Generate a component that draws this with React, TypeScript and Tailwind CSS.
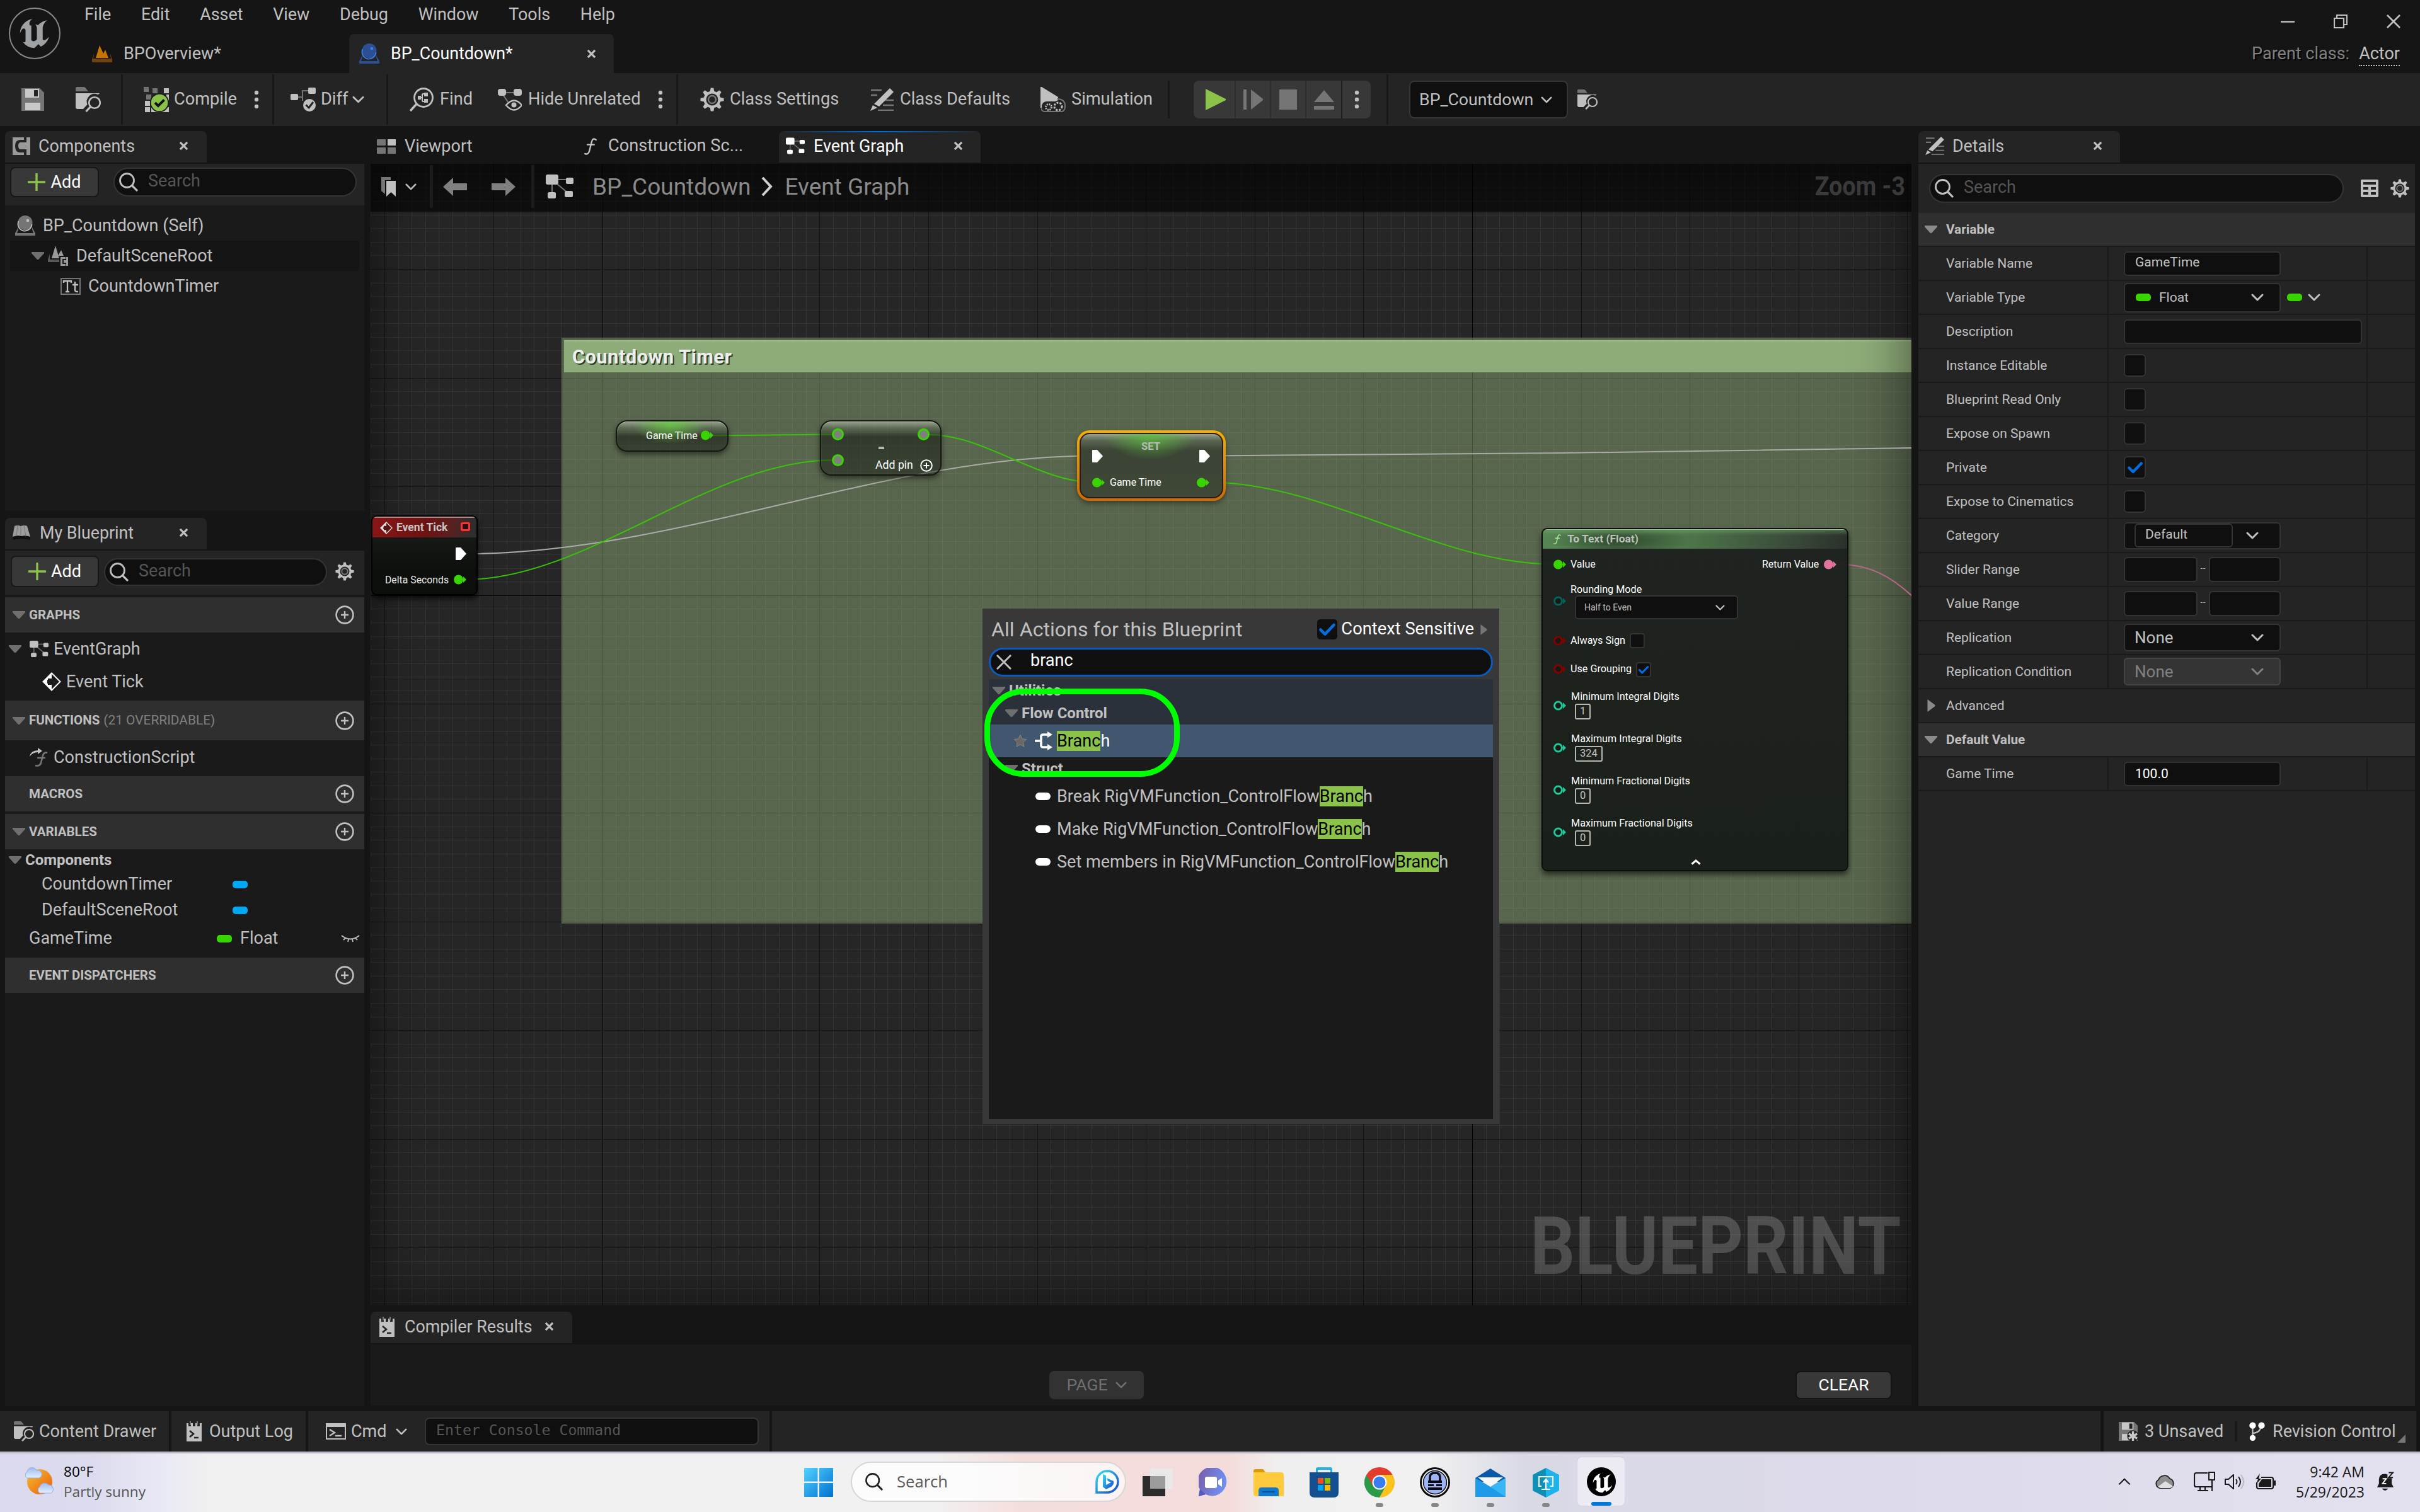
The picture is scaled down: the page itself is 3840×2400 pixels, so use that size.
import React from "react";
import { SiUnrealengine } from "react-icons/si";

type P = { className?: string };

/* ---------- small shared drawings ---------- */

const Down = ({ className = "w-5 h-3 text-[#6f6f6f]" }: P) => (
  <svg viewBox="0 0 20 12" className={`shrink-0 ${className}`}><path d="M0 0h20v2L11 12H9L0 2z" fill="currentColor" /></svg>
);
const Right = ({ className = "w-3 h-5 text-[#8a8a8a]" }: P) => (
  <svg viewBox="0 0 12 20" className={`shrink-0 ${className}`}><path d="M0 0l12 9v2L0 20z" fill="currentColor" /></svg>
);
const Chevron = ({ className = "w-5 h-3" }: P) => (
  <svg viewBox="0 0 20 12" className={`shrink-0 ${className}`}><path d="M2 2l8 8 8-8" fill="none" stroke="currentColor" strokeWidth="3" strokeLinecap="round" strokeLinejoin="round" /></svg>
);
const Close = ({ className = "w-4 h-4" }: P) => (
  <svg viewBox="0 0 16 16" className={`shrink-0 ${className}`}><path d="M2 2l12 12M14 2L2 14" stroke="currentColor" strokeWidth="3.4" /></svg>
);
const Lens = ({ className = "w-[30px] h-[30px]" }: P) => (
  <svg viewBox="0 0 30 30" className={`shrink-0 ${className}`}><circle cx="12.5" cy="12.5" r="11" fill="none" stroke="currentColor" strokeWidth="2.8" /><path d="M20 20l9 9" stroke="currentColor" strokeWidth="3.2" /></svg>
);
const Dots = () => (
  <svg viewBox="0 0 8 30" className="w-2 h-[30px] shrink-0 text-[#c0c0c0]"><circle cx="4" cy="4" r="3.2" fill="currentColor" /><circle cx="4" cy="15" r="3.2" fill="currentColor" /><circle cx="4" cy="26" r="3.2" fill="currentColor" /></svg>
);
const Gear = ({ className = "w-[38px] h-[38px]" }: P) => (
  <svg viewBox="-19 -19 38 38" className={`shrink-0 text-[#c0c0c0] ${className}`}>
    <circle r="11.5" fill="none" stroke="currentColor" strokeWidth="4" />
    <circle r="6" fill="none" stroke="#7a7a7a" strokeWidth="2.4" />
    {[0, 45, 90, 135, 180, 225, 270, 315].map((a) => (
      <path key={a} transform={`rotate(${a})`} d="M-3.6 -12l1.4-6.5h4.4l1.4 6.5z" fill="currentColor" />
    ))}
  </svg>
);
const Tick = ({ className = "w-6 h-6" }: P) => (
  <svg viewBox="0 0 24 24" className={`shrink-0 ${className}`}><path d="M3 12.5l6 6L21 6" fill="none" stroke="#0070e0" strokeWidth="4" strokeLinecap="round" strokeLinejoin="round" /></svg>
);
const PlusRing = () => (
  <svg viewBox="0 0 30 30" className="w-[30px] h-[30px] shrink-0 text-[#c0c0c0]"><circle cx="15" cy="15" r="13.4" fill="none" stroke="currentColor" strokeWidth="2.6" /><path d="M15 9v12M9 15h12" stroke="currentColor" strokeWidth="2.4" /></svg>
);
const GraphIcon = ({ className = "w-[30px] h-[27px]" }: P) => (
  <svg viewBox="0 0 44 38" className={`shrink-0 ${className}`} fill="currentColor">
    <path d="M10 8h26M10 10v22M12 10l24 20" stroke="#777" strokeWidth="2" />
    <rect width="20" height="16" rx="3" /><rect x="32" y="5" width="12" height="10" rx="2.5" />
    <rect x="3" y="28" width="13" height="10" rx="2.5" /><rect x="30" y="26" width="13" height="10" rx="2.5" />
  </svg>
);
const FolderFind = ({ className = "w-10 h-10" }: P) => (
  <svg viewBox="0 0 40 40" className={`shrink-0 ${className}`}>
    <path d="M0 7V2q0-2 2-2h11q2 0 3 2l4 5z" fill="#757575" />
    <path d="M0 10h38q-1 2-3 2a12.500 12.500 0 0 0-16.500 16L12 35H3q-3 0-3-3z" fill="#c0c0c0" />
    <circle cx="30" cy="25" r="8.800" fill="none" stroke="#c0c0c0" strokeWidth="2.600" /><path d="M24 31l-7.500 8" stroke="#c0c0c0" strokeWidth="3.200" />
  </svg>
);
const Floppy = ({ star, className = "w-9 h-9" }: P & { star?: boolean }) => (
  <svg viewBox="0 0 36 36" className={`shrink-0 ${className}`}>
    <path d="M0 0h29l7 7v29H0z" fill="#757575" /><path d="M6 1h22v14H6z" fill="#c8c8c8" /><path d="M20 3h6v10h-6z" fill="#242424" /><path d="M6 23h24v12H6z" fill="#c8c8c8" />
    {star && <><circle cx="27" cy="27" r="11" fill="#242424" /><path d="M27 18v18M19 22.500l16 9M35 22.500l-16 9" stroke="#c8c8c8" strokeWidth="4" /></>}
  </svg>
);
const Pencil = ({ className = "w-[37px] h-9" }: P) => (
  <svg viewBox="0 0 37 36" className={`shrink-0 ${className}`}>
    <path d="M1 3h17M1 11h10M24 19h13M20 27h17M12 35h25" stroke="#757575" strokeWidth="2.6" />
    <path d="M31 0l6 6L14 29l-8-4z" fill="#c0c0c0" /><path d="M4 27l7 4-11 5z" fill="#c0c0c0" />
  </svg>
);
const FnIcon = ({ className = "w-5 h-7" }: P) => (
  <svg viewBox="0 0 20 28" className={`shrink-0 ${className}`}><path d="M19 3q-5-4-7 3L8 22q-2 6-7 4M5 11h11" fill="none" stroke="currentColor" strokeWidth="2.5" strokeLinecap="round" /></svg>
);
const Actor = ({ main, glass, className = "w-8 h-8" }: P & { main: string; glass: string }) => (
  <svg viewBox="0 0 32 32" className={`shrink-0 ${className}`}>
    <path d="M5 19L0 28v4h32v-4l-5-9v3l2 6H3l2-6z" fill={main} /><circle cx="16" cy="11.500" r="11.500" fill={main} />
    <path d="M5.500 9a11 11 0 1 0 21 5" fill="none" stroke={glass} strokeWidth="1.800" /><circle cx="20" cy="8" r="2.300" fill={glass} />
  </svg>
);
const LogIcon = ({ className = "w-6 h-8" }: P) => (
  <svg viewBox="0 0 24 32" className={`shrink-0 ${className}`}>
    <path d="M0 3h3v5h4V3h3v5h4V3h3v5h4V3h3v29H0z" fill="#c0c0c0" /><path d="M5 0h2v6H5zM16 0h2v6h-2z" fill="#757575" />
    <path d="M5 15l6 5-6 5M12 26h7" fill="none" stroke="#242424" strokeWidth="2.600" />
  </svg>
);
const EventDiamond = ({ className = "w-[29px] h-[29px]", bg = "#1a1a1a" }: P & { bg?: string }) => (
  <svg viewBox="0 0 30 30" className={`shrink-0 ${className}`}>
    <path d="M15 1.500L28.500 15 15 28.500 1.500 15z" fill={bg} stroke="currentColor" strokeWidth="2" /><path d="M15 1L1 15l14 14v-9H9V10h6z" fill="currentColor" />
    <path d="M8 12h7V8l8 7-8 7v-4H8z" fill={bg} />
  </svg>
);
const Pill = ({ className }: { className: string }) => <div className={`w-6 h-3 rounded-[5px] shrink-0 ${className}`} />;

/* ---------- title bar ---------- */

function TitleBar() {
  return (
    <header className="flex h-[116px] bg-[#151515]">
      <div className="w-[111px] shrink-0 pl-[14px] pt-[12px]">
        <div className="grid place-items-center w-[82px] h-[82px] rounded-full border-2 border-[#85898c]">
          <SiUnrealengine size={76} color="#9ea2a5" className="[clip-path:circle(44%)]" />
        </div>
      </div>
      <div className="flex-1 flex flex-col">
        <div className="flex h-[54px]">
          <nav className="flex gap-[47.700px] pl-[23px] h-[47px] items-center text-[26.900px]">
            {["File", "Edit", "Asset", "View", "Debug", "Window", "Tools", "Help"].map((m) => <span key={m}>{m}</span>)}
          </nav>
          <div className="flex ml-auto items-center gap-[62px] pr-[31px] pt-[14px]">
            <svg viewBox="0 0 22 22" className="w-[22px] h-[22px]"><path d="M0 11.500h22" stroke="#c0c0c0" strokeWidth="2.500" /></svg>
            <svg viewBox="0 0 22 22" className="w-[22px] h-[22px]" fill="none" stroke="#c0c0c0" strokeWidth="2.200"><path d="M1 6h15v15H1zM5 5V1h16v15h-4" /></svg>
            <svg viewBox="0 0 22 22" className="w-[22px] h-[22px]"><path d="M1 1l20 20M21 1L1 21" stroke="#c0c0c0" strokeWidth="2.600" /></svg>
          </div>
        </div>
        <div className="flex h-[62px]">
          <div className="flex items-center w-[443px] pl-[35px]">
            <svg viewBox="0 0 32 28" className="w-8 h-7 mr-[18px]"><path d="M6 21L12 1l6 13 3-6 5 13z" fill="#c57400" /><path d="M3 14L0 24v4h32v-4l-3-10v2l1 6H2l1-6z" fill="#70440c" /></svg>
            <span>BPOverview*</span>
          </div>
          <div className="flex items-center w-[420px] rounded-t-lg bg-[#242424] pl-4">
            <Actor main="#2c4f94" glass="#3f7ce8" />
            <span className="ml-[18px] text-white text-[26.800px]">BP_Countdown*</span>
            <Close className="w-[15px] h-[15px] ml-auto mr-[28px]" />
          </div>
          <div className="flex items-center ml-auto mr-8 gap-[15px]">
            <span className="text-[#808080] [text-shadow:2px_2px_0_#000]">Parent class:</span>
            <span className="relative">Actor<i className="absolute left-0 right-0 top-[31px] border-b-2 border-dotted border-[#c0c0c0]" /></span>
          </div>
        </div>
      </div>
    </header>
  );
}

/* ---------- toolbar ---------- */

const Sep = () => <div className="w-[3px] h-20 bg-[#181818] shrink-0" />;

function Toolbar() {
  return (
    <div className="flex h-[84px] items-center bg-[#242424] text-[27.200px]">
      <div className="flex items-center w-[192px] pl-[34px] gap-[50px]"><Floppy /><FolderFind /></div>
      <Sep />
      <div className="flex items-center w-[237px] pl-[33px]">
        <svg viewBox="0 0 40 40" className="w-10 h-10 mr-2">
          <path d="M0 0h8v8H0zM14 2h8v8h-8zM4 12h8v8H4z" fill="#757575" /><path d="M32 2h8v8h-8zM2 22h8v8H2zM2 32h8v8H2zM12 32h28v8H12zM36 12h4v10h-4z" fill="#c0c0c0" />
          <circle cx="25" cy="25" r="14.200" fill="#8bc34a" stroke="#1a1a1a" strokeWidth="1.800" /><path d="M18 25l5 5 9.500-9.500" fill="none" stroke="#111" strokeWidth="4" />
        </svg>
        <span className="w-[127px]">Compile</span><Dots />
      </div>
      <Sep />
      <div className="flex items-center w-[178px] pl-[26px]">
        <svg viewBox="0 0 41 38" className="w-[41px] h-[38px] mr-[7px]">
          <path d="M10 15h9V5h10M19 15v6" fill="none" stroke="#757575" strokeWidth="2" /><rect y="10" width="12" height="10" rx="2" fill="#c0c0c0" /><rect x="28" width="12" height="10" rx="2" fill="#c0c0c0" />
          <circle cx="30" cy="28" r="10" fill="#c0c0c0" /><path d="M24.500 27.500l4.500 4.500 7-9" fill="none" stroke="#242424" strokeWidth="3" />
        </svg>
        <span className="mr-[7px]">Diff</span><Chevron className="w-[19px] h-3" />
      </div>
      <Sep />
      <div className="flex items-center w-[457px] pl-[34px]">
        <svg viewBox="0 0 38 38" className="w-[38px] h-[38px] mr-[10px]"><circle cx="22" cy="16" r="14.500" fill="none" stroke="#c0c0c0" strokeWidth="2.800" /><path d="M11 26L1 37" stroke="#c0c0c0" strokeWidth="3.600" /><path d="M13 16h6M20 10v12M20 10h3M20 22h3" stroke="#c0c0c0" strokeWidth="2" fill="none" /><path d="M13 13h5v6h-5zM23 8h6v6h-6zM23 18h6v6h-6z" fill="#c0c0c0" /></svg>
        <span className="w-[92px]">Find</span>
        <svg viewBox="0 0 38 36" className="w-[38px] h-9 mr-[10px]"><path d="M6 7h26M8 10l8 12" stroke="#757575" strokeWidth="2" /><rect y="1" width="13" height="11" rx="4" fill="#c0c0c0" /><rect x="25" y="1" width="13" height="11" rx="4" fill="#c0c0c0" /><path d="M13 27q13-15 25 0-12 15-25 0z" fill="none" stroke="#c0c0c0" strokeWidth="2.400" /><circle cx="25.500" cy="26.500" r="4" fill="#c0c0c0" /></svg>
        <span className="w-[206px]">Hide Unrelated</span><Dots />
      </div>
      <Sep />
      <div className="flex items-center w-[777px] pl-[35px]">
        <Gear className="w-[38px] h-[38px] mr-[9px]" /><span className="w-[223px]">Class Settings</span>
        <Pencil className="w-[37px] h-9 mr-[10px]" /><span className="w-[223px]">Class Defaults</span>
        <svg viewBox="0 0 40 40" className="w-10 h-10 mr-[9px]"><path d="M0 0h2l26 16v5L2 33H0z" fill="#c0c0c0" /><rect x="2" y="23" width="36" height="16" rx="8" fill="#242424" /><path d="M26 19q13 0 13 11t-10 9H6q-5-1-4-5" fill="none" stroke="#757575" strokeWidth="2" /><circle cx="13" cy="32" r="4.500" fill="none" stroke="#c0c0c0" strokeWidth="3" strokeDasharray="2 1.500" /><circle cx="28" cy="31" r="6" fill="none" stroke="#c0c0c0" strokeWidth="3" strokeDasharray="3 2" /></svg>
        <span>Simulation</span>
      </div>
      <div className="w-[3px] h-[60px] bg-[#181818]" />
      <div className="flex items-center ml-[38px] h-[60px] w-[281px] rounded-lg bg-[#383838] text-[#757575]">
        <div className="grid place-items-center w-[67px] h-full border-r-2 border-[#2c2c2c]"><svg viewBox="0 0 32 34" className="w-8 h-[34px] ml-1"><path d="M0 0l32 16v2L0 34z" fill="#8bc34a" /></svg></div>
        <div className="grid place-items-center w-[56px] h-full border-r-2 border-[#2c2c2c]"><svg viewBox="0 0 31 32" className="w-[31px] h-8"><path d="M0 0h5v32H0zM12 0l19 15v2L12 32z" fill="currentColor" /></svg></div>
        <div className="grid place-items-center w-[56px] h-full border-r-2 border-[#2c2c2c]"><div className="w-7 h-8 bg-[#757575]" /></div>
        <div className="grid place-items-center w-[57px] h-full border-r-2 border-[#1f1f1f]"><svg viewBox="0 0 32 31" className="w-8 h-[31px]"><path d="M16 0l16 19H0zM0 25h32v6H0z" fill="currentColor" /></svg></div>
        <div className="grid place-items-center flex-1"><Dots /></div>
      </div>
      <div className="w-[3px] h-20 bg-[#181818] ml-[25px]" />
      <div className="flex items-center h-[60px] w-[252px] ml-[33px] rounded-lg border-2 border-[#353535] bg-[#0f0f0f] pl-[14px]"><span className="w-[193px] text-[26.700px]">BP_Countdown</span><Chevron className="w-[18px] h-[11px]" /></div>
      <FolderFind className="w-8 h-8 ml-[15px]" />
    </div>
  );
}

/* ---------- panels ---------- */

function Tab({ w, icon, gap, label, close, white }: { w: string; icon: React.ReactNode; gap: string; label: string; close: string; white?: boolean }) {
  return (
    <div className={`flex items-center h-[50px] mb-[2px] rounded-t-lg bg-[#242424] pb-[3px] shrink-0 ${w}`}>
      {icon}
      <span className={`${gap} ${white ? "text-white" : ""} mt-[2px] text-[26.800px]`}>{label}</span>
      <Close className={`w-[15px] h-[15px] ml-auto ${close}`} />
    </div>
  );
}

const AddButton = ({ className }: { className: string }) => (
  <div className={`flex items-center justify-center gap-2 rounded-lg border-2 border-[#171717] bg-[#383838] text-white ${className}`}>
    <svg viewBox="0 0 28 28" className="w-7 h-7"><path d="M14 1v26M1 14h26" stroke="#8bc34a" strokeWidth="3.400" strokeLinecap="round" /></svg>Add
  </div>
);
const SearchBox = ({ className }: { className: string }) => (
  <div className={`flex items-center rounded-full border-2 border-[#353535] bg-[#0f0f0f] pl-[7px] ${className}`}><Lens /><span className="ml-[16px] mb-1 text-[#555]">Search</span></div>
);

function ComponentsPanel() {
  return (
    <>
      <Tab w="w-[320px] pl-[12px]" gap="ml-[13px]" close="mr-[29px]" label="Components"
        icon={<svg viewBox="0 0 28 28" className="w-7 h-7"><path d="M0 0h18v4H12Q4 4 4 14t8 10h6v4H0z" fill="#9a9a9a" /><path d="M18 8v11h-5q-4 0-4-5.500T13 8z" fill="#9a9a9a" /><path d="M22 0h6v28h-6v-9h-5V8h5z" fill="#9a9a9a" /></svg>} />
      <section className="flex flex-col h-[551px] mb-[11px] bg-[#1a1a1a]">
        <div className="flex h-[66px] pt-[5px] pl-[8px] bg-[#242424]"><AddButton className="w-[141px] h-[48px]" /><SearchBox className="w-[386px] h-[46px] ml-[23px] mt-px" /></div>
        <div className="flex items-center h-[56px] pt-2 pl-4"><Actor main="#757575" glass="#c0c0c0" /><span className="ml-3">BP_Countdown (Self)</span></div>
        <div className="flex items-center h-[48px] mx-2 pl-[34px] bg-[#151515]"><Down />
          <svg viewBox="0 0 33 33" className="w-[33px] h-[33px] ml-[6px]"><path d="M6 20L12 0l6 20z" fill="#9a9a9a" /><path d="M17 14l4-7 4 9h-8z" fill="#9a9a9a" /><path d="M3 13L0 22v4h18v-4H3z" fill="#5a5a5a" /><path d="M20 18h8v3h-5v8h5v3h-8zM29 18h3v14h-3zM25 23h4v4h-4z" fill="#9a9a9a" /></svg>
          <span className="ml-3">DefaultSceneRoot</span></div>
        <div className="flex items-center h-[48px] pl-[88px]">
          <svg viewBox="0 0 32 27" className="w-8 h-[27px]"><path d="M1 1h30v25H1z" fill="none" stroke="#757575" strokeWidth="2" /><path d="M5 8V5h12v3M11 5v17M8 22h6M19 11h9M23 6v14q0 2 5 2" fill="none" stroke="#c0c0c0" strokeWidth="2.300" /></svg>
          <span className="ml-3">CountdownTimer</span></div>
      </section>
    </>
  );
}

const Section = ({ h, title, note, tri }: { h: string; title: string; note?: string; tri?: boolean }) => (
  <div className={`flex items-center bg-[#2f2f2f] pr-4 ${h}`}>
    <div className="w-[38px] pl-3">{tri && <Down />}</div>
    <b className="text-[20.500px]">{title}</b>{note && <span className="ml-[6px] text-[20.900px] text-[#808080]">{note}</span>}
    <div className="ml-auto"><PlusRing /></div>
  </div>
);

function MyBlueprintPanel() {
  return (
    <>
      <Tab w="w-[320px] pl-[11px]" gap="ml-[14px]" close="mr-[29px]" label="My Blueprint"
        icon={<svg viewBox="0 0 30 26" className="w-[30px] h-[26px]"><path d="M2 18q12-4 27 0v6q-14-3-28 0z" fill="#101010" /><path d="M4 2q5-2 10 0 6-2 10 0l5 17q-7-3-14-1-7-2-14 1z" fill="#9c9c9c" /><path d="M14 2v16M9 1L7 18M19 1l3 17" stroke="#777" /></svg>} />
      <section className="flex flex-col h-[1358px] bg-[#1a1a1a]">
        <div className="flex h-[70px] mb-1 pt-2 pl-[9px] bg-[#242424] shadow-[0_4px_0_#171717]"><AddButton className="w-[140px] h-[50px]" /><SearchBox className="w-[354px] h-[44px] ml-2 mt-1" /><Gear className="w-[30px] h-[30px] ml-[13px] mt-[10px]" /></div>
        <Section h="h-[56px]" title="GRAPHS" tri />
        <div className="flex items-center h-[51px] pl-[6px] pt-px"><Down /><GraphIcon className="w-[30px] h-[26px] ml-[13px]" /><span className="ml-2">EventGraph</span></div>
        <div className="flex items-center h-[57px] pl-[59px] pb-[3px]"><EventDiamond className="w-[30px] h-[30px] text-white" /><span className="ml-2">Event Tick</span></div>
        <Section h="h-[63px]" title="FUNCTIONS" note="(21 OVERRIDABLE)" tri />
        <div className="flex items-center h-[57px] pl-[38px] pb-[3px]">
          <svg viewBox="0 0 30 32" className="w-[30px] h-8"><path d="M29 9q-5-2-7 4l-3 12q-2 6-9 4M13 17h13" fill="none" stroke="#757575" strokeWidth="2.600" /><path d="M1 15q2-10 13-10V1l7 5-7 5V8Q6 8 1 15z" fill="#c0c0c0" /></svg>
          <span className="ml-[9px]">ConstructionScript</span></div>
        <Section h="h-[56px] mb-1" title="MACROS" />
        <Section h="h-[56px]" title="VARIABLES" tri />
        <div className="flex items-center h-[34px] pl-[6px]"><Down /><b className="ml-[6px] text-[24px]">Components</b></div>
        {["CountdownTimer", "DefaultSceneRoot"].map((n) => (
          <div key={n} className="flex items-center h-[41px] pl-[58px] pt-[2px]"><span className="w-[303px]">{n}</span><Pill className="bg-[#00a8f4]" /></div>
        ))}
        <div className="flex items-center h-[56px] pl-[38px] pb-[5px]"><span className="w-[298px]">GameTime</span><Pill className="bg-[#38d500]" /><span className="ml-3 w-[161px] pl-px">Float</span>
          <svg viewBox="0 0 30 12" className="w-[30px] h-3"><path d="M1 1q14 11 28 0M7 5l-3 3M12 7l-1 4M18 7l1 4M23 5l3 3" fill="none" stroke="#c0c0c0" strokeWidth="1.800" /></svg></div>
        <Section h="h-[56px]" title="EVENT DISPATCHERS" />
      </section>
    </>
  );
}

/* ---------- graph canvas ---------- */

const PITCH = 21.575;
const range = (a: number, b: number) => Array.from({ length: b - a + 1 }, (_, i) => a + i);
const lineColor = (k: number) => (k % 64 === 0 ? "#000" : k % 8 === 0 ? "#151515" : "#343434");
const byWeight = (a: number, b: number) => (a % 8 === 0 ? 1 : 0) - (b % 8 === 0 ? 1 : 0);

function Grid() {
  return (
    <svg className="absolute inset-0 w-[3840px] h-[2400px]" shapeRendering="crispEdges">
      {range(-31, 52).map((k) => <rect key={k} x="588" width="2445" y={Math.round(945.3 + k * PITCH - 0.5)} height="1" fill="#343434" />)}
      {range(-17, 96).sort(byWeight).map((k) => <rect key={k} y="260" height="1812" x={Math.round(955.7 + k * PITCH - 0.5)} width="1" fill={lineColor(k)} />)}
      {range(-31, 52).filter((k) => k % 8 === 0).map((k) => <rect key={k} x="588" width="2445" y={Math.round(945.3 + k * PITCH - 0.5)} height="1" fill={lineColor(k)} />)}
    </svg>
  );
}

const spline = (x1: number, y1: number, x2: number, y2: number) => {
  const d = (x2 - x1) / 3;
  return `M${x1} ${y1}C${x1 + d} ${y1} ${x2 - d} ${y2} ${x2} ${y2}`;
};

const ValuePin = ({ color, hollow, dark, className }: { color: string; hollow?: boolean; dark?: string; className: string }) => (
  <svg viewBox="0 0 20 16" className={`absolute w-5 h-4 ${className}`}>
    <path d="M15 3l5 5-5 5z" fill={color} /><circle cx="7.500" cy="8" r={hollow ? 6 : 7.500} fill={hollow ? dark || "#151a15" : color} stroke={color} strokeWidth={hollow ? 3 : 0} />
  </svg>
);
const ExecPin = ({ className }: { className: string }) => (
  <svg viewBox="0 0 17 20" className={`absolute w-[17px] h-5 ${className}`}><path d="M1 0h7l9 10-9 10H1q-1 0-1-1V1q0-1 1-1z" fill="#fff" /></svg>
);
const MathPin = ({ className }: { className: string }) => <div className={`absolute w-[19px] h-[19px] rounded-full border-[3px] border-[#38d500] bg-[#7f7f7f] ${className}`} />;

const glass = "bg-[linear-gradient(180deg,rgba(225,235,220,.45)_0,rgba(110,125,105,.25)_10px,rgba(12,14,10,.5)_24px,rgba(12,14,10,.42)_100%)] border-2 border-[#141811] shadow-[0_4px_8px_rgba(0,0,0,.5),inset_0_1px_1px_rgba(220,230,215,.5)]";

function IntPin({ y, label, value }: { y: string; label: string; value: string }) {
  return (
    <div className={`absolute left-[17px] ${y}`}>
      <ValuePin color="#1ec79c" hollow className="left-0 top-[16px]" />
      <div className="ml-7 text-white text-[16.200px] leading-5">{label}</div>
      <div className="ml-[34px] w-fit h-[25px] mt-px px-[6px] border-2 border-[#b4b9b3] rounded-[3px] text-[16.500px] leading-[20px] text-[#c4c4c4]">{value}</div>
    </div>
  );
}

function Nodes() {
  return (
    <div className="text-[16px] text-white leading-none">
      {/* variable getter */}
      <div className={`absolute left-[977px] top-[667px] w-[179px] h-[50px] rounded-[18px] overflow-hidden ${glass}`}>
        <div className="absolute left-6 top-0 w-[120px] h-9 bg-[radial-gradient(ellipse_at_50%_10%,rgba(100,210,60,.75),transparent_70%)]" />
        <span className="absolute left-[46px] top-[15px]">Game Time</span>
        <ValuePin color="#38d500" className="left-[133px] top-[14px]" />
      </div>
      {/* subtract */}
      <div className={`absolute left-[1301px] top-[667px] w-[193px] h-[88px] rounded-[18px] ${glass}`}>
        <MathPin className="left-[17px] top-[11px]" /><MathPin className="left-[17px] top-[52px]" /><MathPin className="left-[153px] top-[11px]" />
        <div className="absolute left-[91px] top-[40px] w-[9px] h-1 bg-[#b5b9b1]" />
        <span className="absolute left-[86px] top-[61px] text-[17.700px]">Add pin</span>
        <svg viewBox="0 0 20 20" className="absolute left-[157px] top-[60px] w-5 h-5"><circle cx="10" cy="10" r="8.800" fill="none" stroke="#fff" strokeWidth="2" /><path d="M10 5.500v9M5.500 10h9" stroke="#fff" strokeWidth="2" /></svg>
      </div>
      {/* event tick */}
      <div className="absolute left-[589px] top-[818px] w-[169px] h-[127px] rounded-[9px] border-2 border-black overflow-hidden bg-[linear-gradient(180deg,#1c1f1b,#0c0f0b_70%)] shadow-[0_5px_10px_rgba(0,0,0,.7)]">
        <div className="flex items-center h-[33px] pl-3 border-t-2 border-[#a88] bg-[linear-gradient(100deg,#8a1616_0,#6d1212_50%,#5a2020_75%,#2e2e2e_95%)]">
          <EventDiamond className="w-5 h-5 text-[#ddd]" bg="#5a1212" /><b className="ml-[6px] text-[17.500px] text-[#c8c4c4]">Event Tick</b>
          <div className="ml-[21px] -mt-1 w-[15px] h-[14px] rounded-[3px] border-[3px] border-[#ff3030] bg-[#2a1010]" />
        </div>
        <ExecPin className="left-[132px] top-[49px]" />
        <span className="absolute left-[20px] top-[93px] text-[15.800px] text-[#e8e8e8]">Delta Seconds</span>
        <ValuePin color="#38d500" className="left-[129px] top-[92px]" />
      </div>
      {/* set */}
      <div className="absolute left-[1709px] top-[683px] w-[236px] h-[112px] rounded-[20px] p-[4px] bg-[linear-gradient(180deg,#f5b000,#d06a00)] shadow-[0_4px_8px_rgba(0,0,0,.4)]">
        <div className="relative w-full h-full rounded-[16px] overflow-hidden border-2 border-[#2a1c08] bg-[linear-gradient(180deg,#9aa392_0,#5b6653_10px,#3b4435_26px,#3f4836_100%)]">
          <div className="absolute left-[30px] top-0 w-[160px] h-11 bg-[radial-gradient(ellipse_at_50%_0%,rgba(90,190,60,.85),transparent_65%)]" />
          <b className="absolute left-[96px] top-[12px] text-[16.600px] text-[#b9bdb5]">SET</b>
          <ExecPin className="left-[18px] top-[25px]" /><ExecPin className="left-[188px] top-[25px]" />
          <ValuePin color="#38d500" className="left-[18px] top-[69px]" /><span className="absolute left-[46px] top-[69px]">Game Time</span><ValuePin color="#38d500" className="left-[184px] top-[69px]" />
        </div>
      </div>
      {/* to text */}
      <div className="absolute left-[2446px] top-[838px] w-[487px] h-[545px] rounded-[9px] border-2 border-[#0b0f0b] overflow-hidden bg-[linear-gradient(180deg,rgba(28,32,30,.94)_0,rgba(22,27,22,.94)_100%)] shadow-[0_5px_10px_rgba(0,0,0,.6)]">
        <div className="flex items-center h-[31px] pl-[17px] text-[#a8ec98] border-t border-[#9dc496] bg-[linear-gradient(180deg,rgba(120,170,110,.45)_0,transparent_9px),radial-gradient(110px_26px_at_120px_17px,rgba(38,58,38,.8)_0,transparent_100%),linear-gradient(100deg,#568653_0,#4c7349_50%,#3b4c3a_80%,#2a302a_100%)]">
          <FnIcon className="w-3 h-4" /><b className="ml-[10px] text-[17.400px] text-[#bcc4ba]">To Text (Float)</b>
        </div>
        <ValuePin color="#38d500" className="left-[17px] top-[48px]" /><span className="absolute left-[44px] top-[48px]">Value</span>
        <span className="absolute left-[348px] top-[48px]">Return Value</span><ValuePin color="#e0749f" className="left-[446px] top-[48px]" />
        <span className="absolute left-[44px] top-[88px] text-[16.200px]">Rounding Mode</span>
        <ValuePin color="#06615a" hollow className="left-[17px] top-[106px]" />
        <div className="absolute left-[51px] top-[105px] w-[259px] h-[38px] rounded-[5px] border-2 border-[#333] bg-[#0f0f0f] flex items-center pl-[13px] pr-[19px] text-[14px] text-[#c0c0c0]">Half to Even<Chevron className="w-[15px] h-[9px] ml-auto" /></div>
        <ValuePin color="#860000" hollow className="left-[17px] top-[169px]" /><span className="absolute left-[44px] top-[169px] text-[16.200px]">Always Sign</span>
        <div className="absolute left-[138px] top-[165px] w-6 h-6 rounded-[4px] border-2 border-[#333] bg-[#0f0f0f]" />
        <ValuePin color="#860000" hollow className="left-[17px] top-[214px]" /><span className="absolute left-[44px] top-[214px] text-[16.200px]">Use Grouping</span>
        <div className="absolute left-[148px] top-[211px] w-6 h-6 rounded-[4px] border-2 border-[#333] bg-[#0f0f0f] grid place-items-center"><Tick className="w-[18px] h-[18px]" /></div>
        <IntPin y="top-[256px]" label="Minimum Integral Digits" value="1" />
        <IntPin y="top-[323px]" label="Maximum Integral Digits" value="324" />
        <IntPin y="top-[390px]" label="Minimum Fractional Digits" value="0" />
        <IntPin y="top-[457px]" label="Maximum Fractional Digits" value="0" />
        <svg viewBox="0 0 16 9" className="absolute left-[235px] top-[524px] w-4 h-[9px]"><path d="M1.500 7.500L8 2l6.500 5.500" fill="none" stroke="#fff" strokeWidth="3" /></svg>
      </div>
    </div>
  );
}

const Hit = () => <><mark className="bg-[#8bc34a] text-black h-8 leading-8">Branc</mark>h</>;

function ActionMenu() {
  return (
    <div className="absolute left-[1559px] top-[966px] w-[820px] h-[818px] bg-[#383838] px-[10px] text-[27.080px]">
      <div className="flex items-center h-[62px] pl-1 pt-1">
        <span className="text-[32.200px]">All Actions for this Blueprint</span>
        <div className="ml-auto w-8 h-8 rounded-[5px] bg-[#0f0f0f] grid place-items-center"><Tick className="w-7 h-7" /></div>
        <span className="ml-[6px] text-[27.300px] text-white">Context Sensitive</span><Right className="w-[11px] h-[17px] ml-[10px] mr-[9px] text-[#757575]" />
      </div>
      <div className="flex items-center h-[46px] rounded-full border-[3px] border-[#0a5cc0] bg-[#0f0f0f] pl-[9px] text-white">
        <svg viewBox="0 0 24 24" className="w-6 h-6"><path d="M1 1l22 22M23 1L1 23" stroke="#c0c0c0" strokeWidth="3" /></svg><span className="ml-[30px] mb-1">branc</span>
      </div>
      <div className="mt-1 h-[698px] bg-[#1a1a1a]">
        <div className="flex items-center h-9 bg-[#2b313a] pl-[6px]"><Down /><b className="ml-[6px] text-[24px]">Utilities</b></div>
        <div className="flex items-center h-9 bg-[#2b313a] pl-[26px]"><Down /><b className="ml-[6px] text-[24px]">Flow Control</b></div>
        <div className="flex items-center h-[52px] bg-[#41566f] text-white pl-10">
          <svg viewBox="0 0 20 20" className="w-5 h-5"><path d="M10 .5l3 6.200 6.800.9-5 4.800 1.200 6.800-6-3.300-6 3.300 1.200-6.800-5-4.800 6.800-.9z" fill="#6b6762" stroke="#8a857f" /></svg>
          <svg viewBox="0 0 28 30" className="w-7 h-[30px] ml-[13px] mr-[7px]"><path d="M0 15h10M21 5h-8q-3 0-3 3v14q0 3 3 3h8" fill="none" stroke="#fff" strokeWidth="3.600" /><path d="M20 0l8 5-8 5zM20 20l8 5-8 5z" fill="#fff" /></svg>
          <span><Hit /></span>
        </div>
        <div className="flex items-center h-9 pl-[26px]"><Down /><b className="ml-[6px] text-[24px]">Struct</b></div>
        {["Break", "Make", "Set members in"].map((v) => (
          <div key={v} className="flex items-center h-[52px] pl-[74px]"><Pill className="bg-white rounded-md" /><span className="ml-[10px]">{v} RigVMFunction_ControlFlow<Hit /></span></div>
        ))}
      </div>
    </div>
  );
}

function Graph() {
  return (
    <div className="relative h-[1812px] mb-[10px] overflow-hidden bg-[#262626]">
      <div className="absolute -left-[588px] -top-[260px] w-[3840px] h-[2400px]">
        <Grid />
        <div className="absolute left-[2428px] top-[1896px] text-[128px] leading-[164px] font-bold text-[#777]/50 origin-left scale-x-[0.872]">BLUEPRINT</div>
        <div className="absolute left-[891px] top-[536px] w-[2300px] h-[930px] bg-[rgba(186,223,155,.35)] border-2 border-[#4c5845]/60">
          <div className="mt-[2px] ml-[2px] h-[51px] bg-[#8eac79] border-t-2 border-[#9dbd88] pl-[13px] flex items-center text-[30.500px] tracking-[.68px] font-bold text-[#eee] [text-shadow:2px_2px_0_#2a3a22] pt-px">Countdown Timer</div>
        </div>
        <div className="absolute left-[588px] top-[260px] w-[2445px] h-[1812px] shadow-[inset_0_0_90px_rgba(0,0,0,.55)]" />
        <svg className="absolute inset-0 w-[3840px] h-[2400px]" fill="none">
          <path d={spline(740, 879, 1735, 723.5)} stroke="#a9aba7" strokeWidth="2" />
          <path d={`${spline(1920, 723.5, 2480, 719)}L3040 711`} stroke="#a9aba7" strokeWidth="2" />
          <path d={spline(738, 920, 1320, 730.5)} stroke="#38c208" strokeWidth="2" />
          <path d="M1132 691.500L1320 689.500" stroke="#38c208" strokeWidth="2" />
          <path d={spline(1475, 690, 1735, 765.5)} stroke="#38c208" strokeWidth="2" />
          <path d={spline(1918, 765.5, 2466, 895.6)} stroke="#38c208" strokeWidth="2" />
          <path d="M2912 895.600C2965 895 3002 914 3040 952" stroke="#b9668a" strokeWidth="2" />
        </svg>
        <Nodes />
        <ActionMenu />
        <div className="absolute left-[1562px] top-[1093px] w-[310px] h-[140px] rounded-[62px] border-[9px] border-[#00ff00]" />
      </div>
      <div className="relative flex items-center h-[76px] bg-black/60 text-[37px] text-[#8a8a8a] pb-1">
        <div className="flex items-center w-[94px] pl-[17px]">
          <svg viewBox="0 0 23 31" className="w-[23px] h-[31px] mr-[15px]"><path d="M0 0h15v5H6v22l-6-5z" fill="#757575" /><path d="M8 6h15v25l-7.500-7L8 31z" fill="#c0c0c0" /></svg><Chevron className="w-[18px] h-[11px] text-[#c0c0c0]" />
        </div>
        <div className="w-[5px] h-[68px] bg-[#1c1c1c]" />
        <div className="flex items-center w-[156px] pl-[16px] gap-[39px]">
          <svg viewBox="0 0 38 29" className="w-[38px] h-[29px]"><path d="M0 14.500L16 0v9h22v11H16v9z" fill="#808080" /></svg>
          <svg viewBox="0 0 38 29" className="w-[38px] h-[29px]"><path d="M38 14.500L22 0v9H0v11h22v9z" fill="#808080" /></svg>
        </div>
        <div className="w-[5px] h-[68px] bg-[#1c1c1c]" />
        <GraphIcon className="w-[44px] h-[38px] ml-[18px] mr-[30px] text-[#c0c0c0]" />
        <span>BP_Countdown</span>
        <svg viewBox="0 0 18 32" className="w-[18px] h-8 ml-[17px] mr-[19px]"><path d="M2 2l13 14L2 30" fill="none" stroke="#d0d0d0" strokeWidth="4" /></svg>
        <span>Event Graph</span>
        <b className="ml-auto mr-[10px] text-[42px] text-[#3a3a3a] origin-right scale-x-[0.895]">Zoom -3</b>
      </div>
    </div>
  );
}

function Center() {
  return (
    <main className="flex flex-col w-[2445px] ml-[10px]">
      <div className="flex h-[52px]">
        <div className="flex items-center w-[339px] h-[50px] pl-[10px] pb-[2px]"><svg viewBox="0 0 30 23" className="w-[30px] h-[23px] mr-[14px]"><path d="M0 0h14v10H0zM0 13h14v10H0zM17 13h13v10H17z" fill="#757575" /><path d="M17 0h13v10H17z" fill="#c0c0c0" /></svg>Viewport</div>
        <div className="flex items-center w-[309px] h-[50px] pb-[2px]"><FnIcon className="w-5 h-[27px] mr-[18px]" /><span className="text-[27.200px]">Construction Sc...</span></div>
        <div className="flex flex-col">
          <div className="relative">
            <Tab w="w-[320px] pl-[11px]" gap="ml-[14px]" close="mr-[28px]" label="Event Graph" white icon={<GraphIcon className="w-[30px] h-[27px] text-white" />} />
            <i className="absolute left-1 right-1 top-0 h-[2px] bg-[linear-gradient(90deg,transparent,#0070e0_50%,transparent)]" />
          </div>
        </div>
      </div>
      <Graph />
      <Tab w="w-[320px] pl-[14px]" gap="ml-[16px]" close="mr-[29px]" label="Compiler Results" icon={<LogIcon />} />
      <div className="flex items-start h-[97px] pt-[42px] bg-[#1a1a1a] text-[26.500px]">
        <div className="flex items-center justify-center gap-[12px] w-[150px] h-[45px] ml-[1077px] rounded-lg bg-[#323232] text-[#6f6f6f]"><span>PAGE</span><Chevron className="w-[18px] h-[11px]" /></div>
        <div className="grid place-items-center w-[153px] h-[45px] ml-auto mr-[31px] rounded-lg border-2 border-[#131313] bg-[#383838] text-white">CLEAR</div>
      </div>
    </main>
  );
}

/* ---------- details ---------- */

const field = "flex items-center rounded-[6px] border-2 border-[#333] bg-[#0f0f0f]";

const Row = ({ label, children }: { label: string; children?: React.ReactNode }) => (
  <div className="flex h-[54px] border-b-2 border-[#1a1a1a]">
    <div className="flex items-center w-[300px] pl-[44px]">{label}</div>
    <div className="flex items-center w-[411px] pl-6 border-l-2 border-[#1a1a1a]">{children}</div>
    <div className="border-l-2 border-[#1a1a1a]" />
  </div>
);
const Check = ({ on }: { on?: boolean }) => <div className={`${field} justify-center w-[35px] h-[36px]`}>{on && <Tick className="w-[26px] h-[26px]" />}</div>;
const DetailsHeader = ({ title }: { title: string }) => (
  <div className="flex items-center h-[54px] border-b-2 border-[#1a1a1a] bg-[#2f2f2f] pl-[10px]"><Down className="w-5 h-3 text-[#8a8a8a]" /><b className="ml-[14px] text-[20.800px]">{title}</b></div>
);
const Select = ({ label, off }: { label: string; off?: boolean }) => (
  <div className={off ? "flex items-center rounded-[6px] border-2 border-[#454545] bg-[#343434] text-[#808080] w-[249px] h-[44px] pl-[15px] pr-[25px] text-[26px]" : `${field} w-[249px] h-[44px] pl-[15px] pr-[25px] text-[26px]`}>{label}<Chevron className="w-5 h-3 ml-auto" /></div>
);
const Pair = () => <><div className={`${field} w-[117px] h-[40px]`} /><span className="w-[18px] text-center text-[12px] tracking-[1px] mb-1">--</span><div className={`${field} w-[114px] h-[40px]`} /></>;

function Details() {
  return (
    <aside className="flex flex-col w-[788px] ml-[11px]">
      <Tab w="w-[320px] pl-[11px]" gap="ml-[13px]" close="mr-[28px]" label="Details" icon={<Pencil className="w-[30px] h-[29px]" />} />
      <section className="h-[1972px] bg-[#242424] text-[21px]">
        <div className="flex items-center h-[78px] pl-[17px] text-[27px]"><SearchBox className="w-[658px] h-[46px]" />
          <svg viewBox="0 0 28 28" className="w-7 h-7 ml-[27px] mr-[19px]"><path d="M2 0h24q2 0 2 2v24q0 2-2 2H2q-2 0-2-2V2q0-2 2-2zM4 4v4h20V4zM4 12v4h8v-4zM16 12v4h8v-4zM4 20v4h8v-4zM16 20v4h8v-4z" fill="#c0c0c0" fillRule="evenodd" /></svg>
          <Gear className="w-[30px] h-[30px]" /></div>
        <DetailsHeader title="Variable" />
        <Row label="Variable Name"><div className={`${field} w-[249px] h-[39px] pl-4 pb-1`}>GameTime</div></Row>
        <Row label="Variable Type"><div className={`${field} w-[249px] h-[47px] pl-[17px] pr-[25px]`}><Pill className="bg-[#38d500]" /><span className="ml-[13px]">Float</span><Chevron className="w-5 h-3 ml-auto" /></div><Pill className="bg-[#38d500] ml-[10px]" /><Chevron className="w-5 h-3 ml-[9px]" /></Row>
        <Row label="Description"><div className={`${field} w-[378px] h-[39px]`} /></Row>
        <Row label="Instance Editable"><Check /></Row>
        <Row label="Blueprint Read Only"><Check /></Row>
        <Row label="Expose on Spawn"><Check /></Row>
        <Row label="Private"><Check on /></Row>
        <Row label="Expose to Cinematics"><Check /></Row>
        <Row label="Category"><div className={`${field} w-[249px] h-[43px] pl-[15px]`}><div className={`${field} w-[156px] h-[38px] pl-[15px] pb-1`}>Default</div><Chevron className="w-5 h-3 ml-[21px]" /></div></Row>
        <Row label="Slider Range"><Pair /></Row>
        <Row label="Value Range"><Pair /></Row>
        <Row label="Replication"><Select label="None" /></Row>
        <Row label="Replication Condition"><Select label="None" off /></Row>
        <div className="flex items-center h-[54px] border-b-2 border-[#1a1a1a] pl-[14px]"><Right className="w-[13px] h-5 text-[#8a8a8a]" /><span className="ml-[17px]">Advanced</span></div>
        <DetailsHeader title="Default Value" />
        <Row label="Game Time"><div className={`${field} w-[249px] h-[39px] pl-[16px] text-white`}>100.0</div></Row>
      </section>
    </aside>
  );
}

/* ---------- status bar ---------- */

function StatusBar() {
  return (
    <footer className="flex h-16 gap-1 bg-[#151515]">
      <div className="flex items-center w-[268px] pl-[22px] bg-[#242424]"><FolderFind className="w-8 h-8 mr-2" />Content Drawer</div>
      <div className="flex items-center w-[213px] pl-6 bg-[#242424]"><LogIcon className="w-6 h-8 mr-[12px]" />Output Log</div>
      <div className="flex items-center w-[732px] pl-[28px] bg-[#242424]">
        <svg viewBox="0 0 32 26" className="w-8 h-[26px] mr-2"><path d="M1 1h30v24H1z" fill="none" stroke="#c0c0c0" strokeWidth="2" /><path d="M0 0h32v6H0z" fill="#c0c0c0" /><path d="M6 10l8 5-8 5M15 20h10" fill="none" stroke="#c0c0c0" strokeWidth="2.400" /></svg>
        <span className="w-[71px]">Cmd</span><Chevron className="w-[18px] h-[11px]" />
        <div className="flex items-center w-[530px] h-[44px] ml-7 rounded-lg border-2 border-[#353535] bg-[#0f0f0f] pl-4 pb-1 text-[#555] text-[23.200px] font-['DejaVu_Sans_Mono',monospace]">Enter Console Command</div>
      </div>
      <div className="w-[2108px] bg-[#242424]" />
      <div className="flex items-center w-[496px] ml-px pl-6 bg-[#242424]">
        <Floppy star className="w-[30px] h-[30px] mr-[11px]" /><span className="w-[144px]">3 Unsaved</span><div className="w-[2px] h-8 bg-[#151515]" />
        <svg viewBox="0 0 28 32" className="w-7 h-[30px] ml-[18px] mr-[11px]"><path d="M7 5v22M21 6q0 12-14 13" fill="none" stroke="#c0c0c0" strokeWidth="2.400" /><circle cx="7" cy="6" r="5.500" fill="#fff" /><circle cx="22" cy="6" r="5.500" fill="#fff" /><circle cx="7" cy="27" r="5" fill="#fff" /></svg>
        <span>Revision Control</span><svg viewBox="0 0 13 13" className="w-[13px] h-[13px] mt-[22px] ml-[2px]"><path d="M13 0v13H0z" fill="#757575" /></svg>
      </div>
    </footer>
  );
}

/* ---------- taskbar ---------- */

const TaskIcon = ({ children, dot }: { children: React.ReactNode; dot?: boolean }) => (
  <div className="relative grid place-items-center w-[88px] h-24 pb-1">
    {children}
    {dot && <i className="absolute bottom-[11px] w-3 h-[6px] rounded-full bg-[#868686]" />}
  </div>
);

function Taskbar() {
  return (
    <div className="flex h-24 border-t-[3px] border-[#b9b6c2] text-black font-['Open_Sans',sans-serif] bg-[linear-gradient(90deg,#dad9ee_0,#dcdcee_150px,#e9e9f6_260px,#f0f0f0_330px,#f1f1f1_1480px,#f4dedd_1620px,#f4dcdb_1950px,#efefef_2030px,#f1f1f1_2260px,#d9d9e6_2420px,#dcdaea_2900px,#e3e0f0_3840px)]">
      <div className="flex items-center w-[1255px] pl-[38px] text-[22.600px]">
        <svg viewBox="0 0 48 44" className="w-12 h-11 mr-[15px] -mt-2">
          <defs><linearGradient id="sun" x2="1" y2="1"><stop stopColor="#f6bf2f" /><stop offset="1" stopColor="#ea5b0c" /></linearGradient><linearGradient id="cl" x2="0" y2="1"><stop stopColor="#9dbcf0" /><stop offset="1" stopColor="#e4effd" /></linearGradient></defs>
          <circle cx="25" cy="24" r="20" fill="url(#sun)" /><path d="M5 18a6 6 0 0 1 0-10 8 8 0 0 1 15-2 6 6 0 0 1 4 12z" fill="url(#cl)" stroke="#8fb0ea" /><path d="M25 42a6 6 0 0 1 0-10 8 8 0 0 1 14-3 7 7 0 0 1 4 13z" fill="url(#cl)" stroke="#8fb0ea" />
        </svg>
        <div className="flex flex-col leading-8 -mt-1"><span>80°F</span><span className="text-[#555]">Partly sunny</span></div>
      </div>
      <TaskIcon><svg viewBox="0 0 46 46" className="w-[46px] h-[46px]"><defs><linearGradient id="win" x2="1" y2="1"><stop stopColor="#51d3ff" /><stop offset="1" stopColor="#0070cf" /></linearGradient></defs><path d="M0 1q0-1 1-1h20.500v21.500H0zM24 0h21q1 0 1 1v20.500H24zM0 24h21.500v22H1q-1 0-1-1zM24 24h22v21q0 1-1 1H24z" fill="url(#win)" /></svg></TaskIcon>
      <div className="flex items-center w-[437px] h-16 mt-[13px] ml-[7px] rounded-full bg-[linear-gradient(90deg,#fcfcfc_40%,#fbf3f3)] border-2 border-[#dcd5d5] pl-[21px] pr-2 text-[25.600px] text-[#5a5a5a]">
        <Lens className="w-7 h-7 mr-[22px] text-[#222]" />Search
        <svg viewBox="0 0 40 40" className="w-10 h-10 ml-auto"><defs><linearGradient id="bing" x2="1" y2="1"><stop stopColor="#37dff0" /><stop offset="1" stopColor="#1847c8" /></linearGradient></defs><path d="M3 37V20A17 17 0 1 1 20 37z" fill="#fff" stroke="url(#bing)" strokeWidth="3.500" /><path d="M13 8l5 2v15l8-4-5-2-2-5 11 5q1 6-4 9l-8 4-5-4z" fill="url(#bing)" /></svg>
      </div>
      <div className="flex ml-[6px]">
        <TaskIcon><svg viewBox="0 0 48 44" className="w-12 h-11"><path d="M0 12h36v32H0z" fill="#2c2c2c" /><path d="M12 0h36v32H12z" fill="#e9e9e9" /><path d="M12 12h24v20H12z" fill="#9c9c9c" /></svg></TaskIcon>
        <TaskIcon><svg viewBox="0 0 46 46" className="w-[46px] h-[46px]"><defs><linearGradient id="chat" x2="1" y2="0.300"><stop stopColor="#7a5aa8" /><stop offset="1" stopColor="#6f8ff0" /></linearGradient></defs><path d="M0 45l2-11a23 23 0 1 1 9 8z" fill="url(#chat)" /><path d="M0 45l2-11 9 8z" fill="#5257c8" /><rect x="10" y="14" width="19" height="18" rx="3" fill="#fff" /><path d="M31 20l6-4v14l-6-4z" fill="#fff" /></svg></TaskIcon>
        <TaskIcon><svg viewBox="0 0 48 43" className="w-12 h-[43px]"><path d="M0 3q0-3 3-3h12l5 6H0z" fill="#dc9a00" /><path d="M0 5h44q4 0 4 4v34H4q-4 0-4-4z" fill="#ffcb3c" /><path d="M8 43V34q0-5 5-5h22q5 0 5 5v9z" fill="#0f78cc" /><path d="M14 35h20v2H14z" fill="#0a4f93" /></svg></TaskIcon>
        <TaskIcon><svg viewBox="0 0 46 48" className="w-[46px] h-12"><path d="M10 12V3q0-3 3-3h20q3 0 3 3v9h-3V4H13v8z" fill="#22b2ee" /><path d="M0 8h46v32q0 8-8 8H8q-8 0-8-8z" fill="#14508f" /><path d="M13 17h9v9h-9z" fill="#f25022" /><path d="M24 17h9v9h-9z" fill="#7fba00" /><path d="M13 28h9v9h-9z" fill="#00a4ef" /><path d="M24 28h9v9h-9z" fill="#ffb900" /></svg></TaskIcon>
        <TaskIcon dot><svg viewBox="0 0 48 48" className="w-12 h-12"><path d="M24 24L3.200 12A24 24 0 0 1 44.800 12z" fill="#e33b2e" /><path d="M24 24h0L44.800 12A24 24 0 0 1 24 48z" fill="#fcc31e" /><path d="M24 24L24 48A24 24 0 0 1 3.200 12z" fill="#2a9a48" /><path d="M24 12h20.800L34 30z" fill="#fcc31e" /><path d="M3.200 12L14 30l10-18z" fill="#e33b2e" /><path d="M34 30L24 48l-8-18z" fill="#2a9a48" /><path d="M34 30L24 48h3L45 14z" fill="#fcc31e" /><circle cx="24" cy="24" r="11.500" fill="#fff" /><circle cx="24" cy="24" r="9.500" fill="#3a7df0" /></svg></TaskIcon>
        <TaskIcon dot><svg viewBox="0 0 48 48" className="w-12 h-12"><circle cx="24" cy="24" r="22.500" fill="#fff" stroke="#0a0a0a" strokeWidth="3" /><circle cx="24" cy="24" r="18.500" fill="#9db5f4" stroke="#0a0a0a" strokeWidth="1.500" /><path d="M16 22v-6q0-7 8-7t8 7v6" fill="none" stroke="#0a0a14" strokeWidth="3.600" /><path d="M13 21h22v4H13zM13 27h9v3h-9zM26 27h9v3h-9zM13 32h22v4H13z" fill="#0a0a14" /></svg></TaskIcon>
        <TaskIcon dot><svg viewBox="0 0 48 45" className="w-12 h-[45px]"><path d="M0 15L24 0l24 15v6H0z" fill="#0a58a8" /><path d="M0 15v30h48V15L24 29z" fill="#1f9ae8" /><path d="M48 15v30L24 29z" fill="#37b6f5" /><path d="M4 14h40L24 29z" fill="#f7f7f7" /></svg></TaskIcon>
        <TaskIcon dot><svg viewBox="0 0 42 47" className="w-[42px] h-[47px]"><path d="M21 0l21 11v25L21 47z" fill="#1db4ee" /><path d="M21 0L0 11v25l21 11z" fill="#108fb4" /><path d="M14 29h-4V14h22v15h-4M21 34V19M17 23l4-5 4 5M14 34h14" fill="none" stroke="#fff" strokeWidth="2.200" /></svg></TaskIcon>
        <div className="relative grid place-items-center w-[77px] h-[79px] mt-[5px] ml-[5px] rounded-lg bg-[#ecebf4] border border-[#d3d1de]">
          <div className="grid place-items-center w-[46px] h-[46px] rounded-full bg-black"><SiUnrealengine size={50} color="#fff" className="[clip-path:circle(45%)]" /></div>
          <i className="absolute bottom-0 w-8 h-[6px] rounded-full bg-[#0078d7]" />
        </div>
      </div>
      <div className="flex items-center ml-auto pr-[41px] pb-1 text-[#1a1a1a]">
        <svg viewBox="0 0 24 14" className="w-[22px] h-[12px] mr-[37px]"><path d="M2 12L12 2l10 10" fill="none" stroke="currentColor" strokeWidth="2.400" /></svg>
        <svg viewBox="0 0 33 23" className="w-[33px] h-[23px] mr-[29px]"><path d="M8 22a7 7 0 0 1-2-13 10 10 0 0 1 18-2 8 8 0 0 1 1 15z" fill="#8f8f8f" stroke="#222" strokeWidth="1.800" /><path d="M5 20l12-9 12 8q-2 3-5 3H9z" fill="#e0e0e0" /></svg>
        <svg viewBox="0 0 34 32" className="w-[34px] h-8 mr-[15px]"><path d="M22 2H4Q1 2 1 5v16q0 3 3 3h25V14M10 24v6M18 24v6M6 30h17" fill="none" stroke="currentColor" strokeWidth="2.200" /><path d="M24 1h9v12h-9zM29 13v18" fill="none" stroke="currentColor" strokeWidth="2" /></svg>
        <svg viewBox="0 0 31 24" className="w-[31px] h-6 mr-[17px]"><path d="M1 8h5l8-7v22l-8-7H1z" fill="none" stroke="currentColor" strokeWidth="2" /><path d="M18 8q3 4 0 8M22 4q6 8 0 16" fill="none" stroke="currentColor" strokeWidth="2" /><path d="M26 1q8 11 0 22" fill="none" stroke="#b9b9c4" strokeWidth="2" /></svg>
        <svg viewBox="0 0 33 26" className="w-[33px] h-[26px] mr-8"><path d="M10 6h16q3 0 3 3v12q0 3-3 3H6q-3 0-3-3v-7" fill="none" stroke="currentColor" strokeWidth="2.200" /><path d="M11 9h15v12H6v-5z" fill="currentColor" /><path d="M30 11h3v8h-3zM8 0L1 9h4l-3 8 8-9H6z" fill="currentColor" /></svg>
        <div className="flex flex-col items-end leading-8 text-[23px]"><span>9:42 AM</span><span>5/29/2023</span></div>
        <svg viewBox="0 0 30 32" className="w-[29px] h-8 ml-[18px]"><path d="M2 25l3-6v-7q0-9 10-9 2 0 4 1v6h7v9l3 6z" fill="currentColor" /><path d="M10 27h10q-5 7-10 0z" fill="currentColor" /><path d="M21 1h7l-7 8h7" fill="none" stroke="currentColor" strokeWidth="2" /><path d="M11 11h6l-6 8h6" fill="none" stroke="#fff" strokeWidth="2" /></svg>
      </div>
    </div>
  );
}

export default function App() {
  return (
    <div className="flex flex-col w-[3840px] h-[2400px] overflow-hidden bg-[#151515] text-[#c0c0c0] font-[Roboto,sans-serif] text-[27px] leading-none whitespace-nowrap">
      <TitleBar />
      <Toolbar />
      <div className="flex h-[2040px] pt-2 pl-2">
        <div className="flex flex-col w-[570px]">
          <ComponentsPanel />
          <MyBlueprintPanel />
        </div>
        <Center />
        <Details />
      </div>
      <StatusBar />
      <Taskbar />
    </div>
  );
}
